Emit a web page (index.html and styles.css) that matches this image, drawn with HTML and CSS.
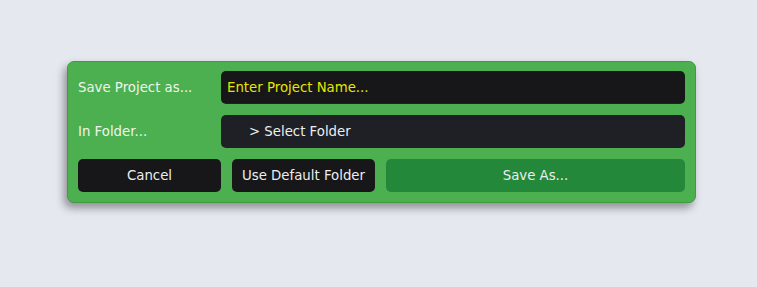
FILE: index.html
```html
<!DOCTYPE html>
<html lang="en">
<head>
<meta charset="UTF-8">
<title>Save Project</title>
<link rel="stylesheet" href="styles.css">
</head>
<body>
  <div class="dialog">
    <div class="row">
      <label class="row-label" for="projectName">Save Project as...</label>
      <input id="projectName" class="name-input" type="text" placeholder="Enter Project Name...">
    </div>
    <div class="row">
      <span class="row-label">In Folder...</span>
      <button class="folder-btn">&gt; Select Folder</button>
    </div>
    <div class="button-row">
      <button class="btn">Cancel</button>
      <button class="btn">Use Default Folder</button>
      <button class="btn btn-save">Save As...</button>
    </div>
  </div>
</body>
</html>
```

FILE: styles.css
```css
html,
body {
  height: 100%;
}

body {
  margin: 0;
  padding: 61px 0 0 67px;
  box-sizing: border-box;
  background-color: #e5e8ef;
  font-family: "DejaVu Sans", sans-serif;
  font-size: 13.3px;
}

.dialog {
  width: 607px;
  padding: 9px 10px 10px 10px;
  background-color: #4caf50;
  border: 1px solid #3f9a43;
  border-radius: 7px;
  box-shadow: -3px 5px 8px rgba(0, 0, 0, 0.38);
  display: flex;
  flex-direction: column;
  gap: 11px;
}

.row {
  display: flex;
  align-items: center;
  height: 33px;
}

.row-label {
  width: 143px;
  flex-shrink: 0;
  color: #eef5ee;
}

.name-input,
.folder-btn {
  flex: 1;
  height: 33px;
  box-sizing: border-box;
  border: none;
  border-radius: 5px;
  font-family: inherit;
  font-size: 13.3px;
  outline: none;
}

.name-input {
  background-color: #171719;
  color: #e6e600;
  padding: 0 6px;
  border-bottom: 1px dotted #2c2c2e;
}

.name-input::placeholder {
  color: #e6e600;
}

.folder-btn {
  background-color: #1e2026;
  color: #eceef0;
  text-align: left;
  padding: 0 0 0 28px;
}

.button-row {
  display: flex;
  gap: 11px;
  height: 33px;
}

.btn {
  width: 143px;
  height: 33px;
  border: none;
  border-radius: 5px;
  background-color: #171719;
  color: #eceef0;
  font-family: inherit;
  font-size: 13.3px;
  padding: 0;
}

.btn-save {
  flex: 1;
  background-color: #23883a;
}
```
